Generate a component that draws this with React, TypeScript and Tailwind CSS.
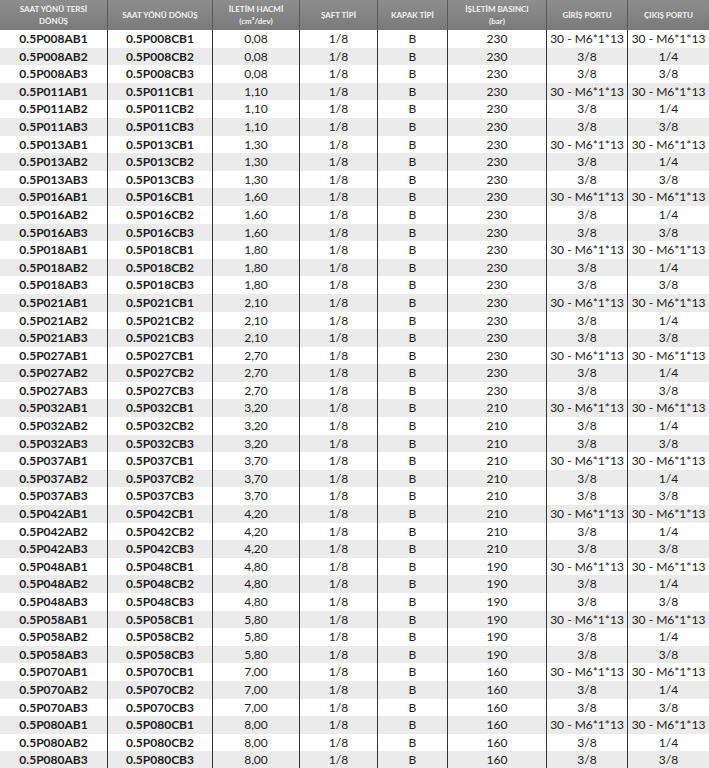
const groups = [
  { code: '008', vol: '0,08', bar: '230' },
  { code: '011', vol: '1,10', bar: '230' },
  { code: '013', vol: '1,30', bar: '230' },
  { code: '016', vol: '1,60', bar: '230' },
  { code: '018', vol: '1,80', bar: '230' },
  { code: '021', vol: '2,10', bar: '230' },
  { code: '027', vol: '2,70', bar: '230' },
  { code: '032', vol: '3,20', bar: '210' },
  { code: '037', vol: '3,70', bar: '210' },
  { code: '042', vol: '4,20', bar: '210' },
  { code: '048', vol: '4,80', bar: '190' },
  { code: '058', vol: '5,80', bar: '190' },
  { code: '070', vol: '7,00', bar: '160' },
  { code: '080', vol: '8,00', bar: '160' },
];

const ports = [
  ['30 - M6*1*13', '30 - M6*1*13'],
  ['3/8', '1/4'],
  ['3/8', '3/8'],
];

const rows = groups.flatMap(g =>
  [1, 2, 3].map(v => ({
    ccw: `0.5P${g.code}AB${v}`,
    cw: `0.5P${g.code}CB${v}`,
    vol: g.vol,
    shaft: '1/8',
    cover: 'B',
    bar: g.bar,
    inlet: ports[v - 1][0],
    outlet: ports[v - 1][1],
  }))
);

const headers: string[][] = [
  ['SAAT YÖNÜ TERSİ', 'DÖNÜŞ'],
  ['SAAT YÖNÜ DÖNÜŞ'],
  ['İLETİM HACMİ', '(cm³/dev)'],
  ['ŞAFT TİPİ'],
  ['KAPAK TİPİ'],
  ['İŞLETİM BASINCI', '(bar)'],
  ['GİRİŞ PORTU'],
  ['ÇIKIŞ PORTU'],
];

const cols = 'grid grid-cols-[107px_105px_87px_78px_70px_99px_81px_82px]';

export default function App() {
  return (
    <div className="w-[709px] h-[768px] overflow-hidden bg-white text-[#1c1c1c] font-['Lato',sans-serif]">
      {/* başlık */}
      <div className={`${cols} h-[30px] bg-gradient-to-b from-[#8e8e8e] to-[#7a7a7a]`}>
        {headers.map((h, i) => (
          <div
            key={i}
            className={`flex flex-col items-center justify-center text-center text-[8px] leading-[12px] font-bold text-[#f2f2f2] ${
              i > 0 ? 'border-l border-[#5a5a5a]' : ''
            }`}
          >
            {h.map((line, j) => (
              <span key={j}>{line}</span>
            ))}
          </div>
        ))}
      </div>

      {rows.map((r, i) => (
        <div key={r.ccw} className={`${cols} h-[17.6px] ${i % 2 ? 'bg-[#ebebeb]' : 'bg-white'}`}>
          <div className="flex items-center justify-center text-[12px] font-bold">{r.ccw}</div>
          <div className="flex items-center justify-center text-[12px] font-bold border-l border-[#333]">{r.cw}</div>
          <div className="flex items-center justify-center text-[12px] border-l border-[#333]">{r.vol}</div>
          <div className="flex items-center justify-center text-[12px] border-l border-[#333]">{r.shaft}</div>
          <div className="flex items-center justify-center text-[12px] border-l border-[#333]">{r.cover}</div>
          <div className="flex items-center justify-center text-[12px] border-l border-[#333]">{r.bar}</div>
          <div className="flex items-center justify-center text-[12px] border-l border-[#333] whitespace-nowrap">{r.inlet}</div>
          <div className="flex items-center justify-center text-[12px] border-l border-[#333] whitespace-nowrap">{r.outlet}</div>
        </div>
      ))}
    </div>
  );
}
